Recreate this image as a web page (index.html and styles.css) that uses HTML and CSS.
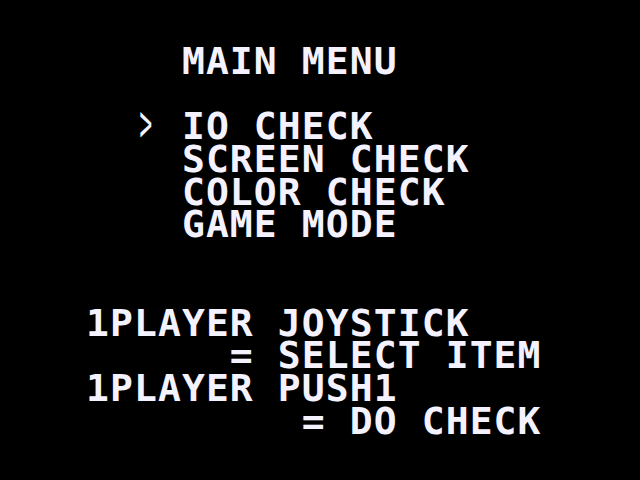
FILE: index.html
```html
<!DOCTYPE html>
<html lang="en">
<head>
<meta charset="utf-8">
<title>MAIN MENU</title>
<link rel="stylesheet" href="styles.css">
</head>
<body>
<main class="screen">
<div class="line">    MAIN MENU</div>
<div class="line"> </div>
<div class="line">  <span class="cursor">&gt;</span> IO CHECK</div>
<div class="line">    SCREEN CHECK</div>
<div class="line">    COLOR CHECK</div>
<div class="line">    GAME MODE</div>
<div class="line"> </div>
<div class="line"> </div>
<div class="line">1PLAYER JOYSTICK</div>
<div class="line">      = SELECT ITEM</div>
<div class="line">1PLAYER PUSH1</div>
<div class="line">         = DO CHECK</div>
</main>
</body>
</html>
```
FILE: styles.css
```css
html, body {
  margin: 0;
  padding: 0;
  background: #000;
}
body {
  width: 640px;
  height: 480px;
  overflow: hidden;
}
.screen {
  padding: 45px 0 0 86px;
  color: #f4f2ff;
  font-family: "DejaVu Sans Mono", "Liberation Mono", monospace;
  font-weight: bold;
  font-size: 38px;
  letter-spacing: 1.1px;
  line-height: 32.7px;
}
.line {
  white-space: pre;
  height: 32.7px;
}
.cursor {
  display: inline-block;
  font-weight: normal;
  transform: scale(0.55, 1.35);
  transform-origin: 50% 70%;
}
```
